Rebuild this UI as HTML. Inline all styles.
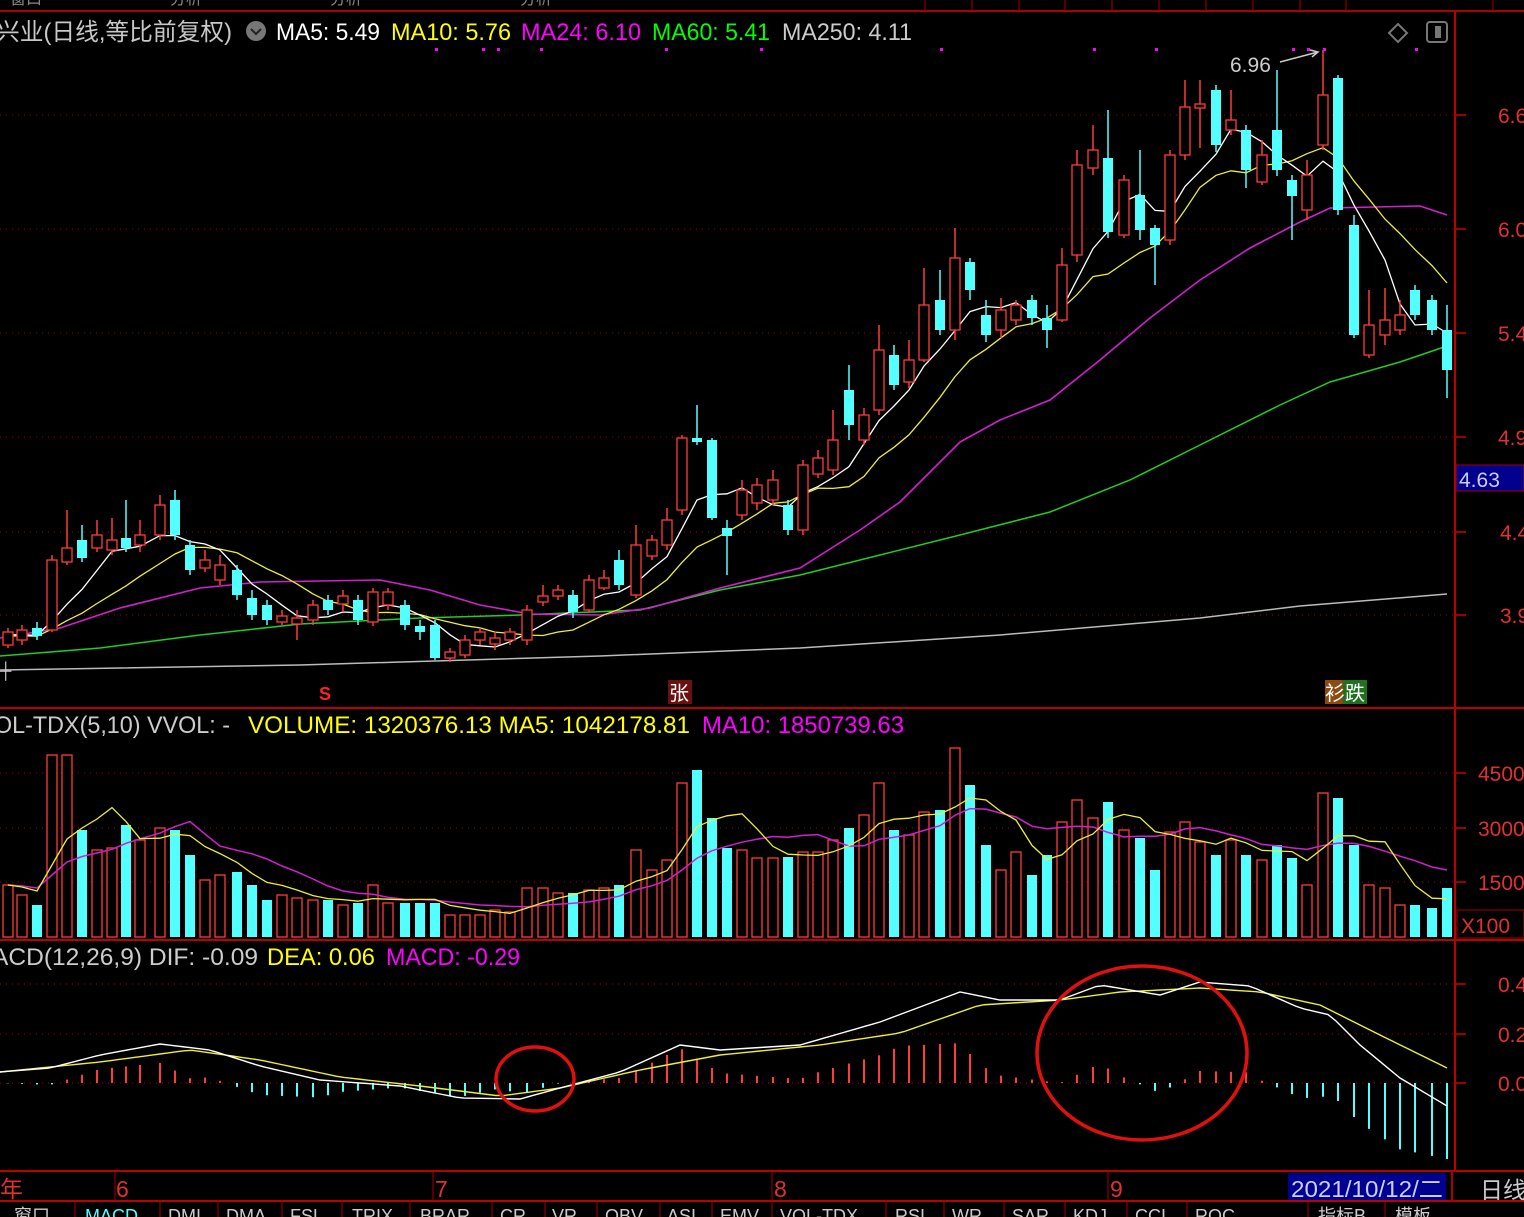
<!DOCTYPE html>
<html><head><meta charset="utf-8"><style>
html,body{margin:0;padding:0;background:#000;width:1524px;height:1217px;overflow:hidden}
svg{display:block}
text{font-family:"Liberation Sans","Noto Sans CJK SC",sans-serif}
</style></head><body>
<svg id="s" width="1524" height="1217" xmlns="http://www.w3.org/2000/svg">
<rect width="1524" height="1217" fill="#000"/>
<g fill="#888" font-size="16"><text x="10" y="4">窗口</text><text x="170" y="4">分析</text><text x="330" y="4">分析</text><text x="520" y="4">分析</text></g>
<line x1="0" y1="11" x2="1524" y2="11" stroke="#a00" stroke-width="2"/>
<g stroke="#a00" stroke-width="1"><line x1="925" y1="0" x2="925" y2="11"/><line x1="972" y1="0" x2="972" y2="11"/><line x1="1019" y1="0" x2="1019" y2="11"/><line x1="1065" y1="0" x2="1065" y2="11"/><line x1="1112" y1="0" x2="1112" y2="11"/><line x1="1159" y1="0" x2="1159" y2="11"/><line x1="1206" y1="0" x2="1206" y2="11"/><line x1="1253" y1="0" x2="1253" y2="11"/><line x1="1300" y1="0" x2="1300" y2="11"/><line x1="1346" y1="0" x2="1346" y2="11"/><line x1="1493" y1="0" x2="1493" y2="11"/></g>
<line x1="1455" y1="11" x2="1455" y2="1172" stroke="#b00" stroke-width="2"/>
<line x1="0" y1="708" x2="1524" y2="708" stroke="#b00" stroke-width="2"/>
<line x1="0" y1="940" x2="1524" y2="940" stroke="#b00" stroke-width="2"/>
<line x1="0" y1="1171" x2="1524" y2="1171" stroke="#b00" stroke-width="2"/>
<line x1="0" y1="1201" x2="1524" y2="1201" stroke="#b00" stroke-width="2"/>
<g id="grid" stroke="#a00" stroke-dasharray="1,5" stroke-width="1"></g>
<g id="plot"></g>
<g font-size="24">
<text x="-4" y="40" fill="#c8c8c8" textLength="236" lengthAdjust="spacingAndGlyphs">兴业(日线,等比前复权)</text>
<circle cx="256" cy="31" r="10" fill="#777"/><path d="M251 29 L256 34 L261 29" stroke="#222" stroke-width="2" fill="none"/>
<text x="276" y="40" fill="#fff" textLength="104" lengthAdjust="spacingAndGlyphs">MA5: 5.49</text>
<text x="391" y="40" fill="#ff0" textLength="120" lengthAdjust="spacingAndGlyphs">MA10: 5.76</text>
<text x="521" y="40" fill="#f0f" textLength="120" lengthAdjust="spacingAndGlyphs">MA24: 6.10</text>
<text x="652" y="40" fill="#0f0" textLength="118" lengthAdjust="spacingAndGlyphs">MA60: 5.41</text>
<text x="782" y="40" fill="#ccc" textLength="130" lengthAdjust="spacingAndGlyphs">MA250: 4.11</text>
<text x="-6" y="733" fill="#ccc" textLength="236" lengthAdjust="spacingAndGlyphs">OL-TDX(5,10)  VVOL: -</text>
<text x="248" y="733" fill="#ff0" textLength="442" lengthAdjust="spacingAndGlyphs">VOLUME: 1320376.13  MA5: 1042178.81</text>
<text x="702" y="733" fill="#f0f" textLength="202" lengthAdjust="spacingAndGlyphs">MA10: 1850739.63</text>
<text x="-8" y="965" fill="#ccc" textLength="266" lengthAdjust="spacingAndGlyphs">ACD(12,26,9)  DIF: -0.09</text>
<text x="267" y="965" fill="#ff0" textLength="108" lengthAdjust="spacingAndGlyphs">DEA: 0.06</text>
<text x="386" y="965" fill="#f0f" textLength="134" lengthAdjust="spacingAndGlyphs">MACD: -0.29</text>
</g>
<path d="M1389 33 L1398 24 L1407 33 L1398 42 Z" stroke="#777" stroke-width="2" fill="none"/>
<rect x="1427" y="22" width="20" height="20" rx="3" stroke="#777" stroke-width="2" fill="none"/><rect x="1435" y="26" width="6" height="12" fill="#777"/>
<g font-size="21" fill="#e03030">
<text x="1498" y="123">6.6</text><text x="1498" y="237">6.0</text><text x="1498" y="341">5.4</text><text x="1498" y="445">4.9</text><text x="1500" y="540">4.4</text><text x="1500" y="623">3.9</text>
<text x="1478" y="781">4500</text><text x="1478" y="836">3000</text><text x="1478" y="890">1500</text>
<text x="1498" y="992">0.4</text><text x="1498" y="1042">0.2</text><text x="1498" y="1091">0.0</text>
</g>
<g stroke="#c00" stroke-width="1.5"><line x1="1456" y1="115" x2="1466" y2="115"/><line x1="1456" y1="229" x2="1466" y2="229"/><line x1="1456" y1="333" x2="1466" y2="333"/><line x1="1456" y1="437" x2="1466" y2="437"/><line x1="1456" y1="532" x2="1466" y2="532"/><line x1="1456" y1="615" x2="1466" y2="615"/><line x1="1456" y1="773" x2="1466" y2="773"/><line x1="1456" y1="828" x2="1466" y2="828"/><line x1="1456" y1="882" x2="1466" y2="882"/><line x1="1456" y1="984" x2="1466" y2="984"/><line x1="1456" y1="1034" x2="1466" y2="1034"/><line x1="1456" y1="1083" x2="1466" y2="1083"/></g>
<rect x="1456" y="465" width="68" height="26" fill="#00008c" stroke="#a00"/>
<text x="1459" y="487" font-size="21" fill="#ccf">4.63</text>
<rect x="1457" y="910" width="67" height="28" fill="#000" stroke="#a00"/>
<text x="1461" y="933" font-size="21" fill="#e03030">X100</text>
<text x="319" y="700" font-size="18" fill="#f22" font-weight="bold">S</text>
<rect x="668" y="680" width="24" height="24" fill="#6a1010"/><text x="669" y="700" font-size="20" fill="#fff">张</text>
<rect x="1325" y="680" width="18" height="24" fill="#8a4a10"/><rect x="1343" y="680" width="24" height="24" fill="#207020"/>
<text x="1325" y="700" font-size="20" fill="#fff">衫跌</text>
<text x="1230" y="72" font-size="21" fill="#ccc">6.96</text>
<path d="M1280 62 L1318 52 M1310 50 L1318 52 L1312 57" stroke="#ccc" fill="none" stroke-width="1.5"/>
<text x="0" y="676" font-size="16" fill="#ccc">┼</text>
<ellipse cx="535" cy="1079" rx="39" ry="32" stroke="#e01010" stroke-width="3.5" fill="none"/>
<ellipse cx="1142" cy="1053" rx="105" ry="87" stroke="#e01010" stroke-width="3.5" fill="none"/>
<g stroke="#a00"><line x1="115" y1="1172" x2="115" y2="1201"/><line x1="433" y1="1172" x2="433" y2="1201"/><line x1="772" y1="1172" x2="772" y2="1201"/><line x1="1108" y1="1172" x2="1108" y2="1201"/><line x1="1452" y1="1172" x2="1452" y2="1201" stroke-width="2"/></g>
<g font-size="23" fill="#e03030"><text x="0" y="1197">年</text><text x="116" y="1197">6</text><text x="435" y="1197">7</text><text x="774" y="1197">8</text><text x="1110" y="1197">9</text></g>
<rect x="1288" y="1173" width="158" height="27" fill="#000090"/>
<text x="1291" y="1197" font-size="23" fill="#ccf" textLength="152" lengthAdjust="spacingAndGlyphs">2021/10/12/二</text>
<text x="1480" y="1198" font-size="23" fill="#ccc">日线</text>
<g font-size="18" fill="#ccc"><text x="14" y="1222">窗口</text><text x="85" y="1222" fill="#5ff">MACD</text><text x="168" y="1222">DMI</text><text x="226" y="1222">DMA</text><text x="290" y="1222">FSL</text><text x="352" y="1222">TRIX</text><text x="420" y="1222">BRAR</text><text x="500" y="1222">CR</text><text x="552" y="1222">VR</text><text x="605" y="1222">OBV</text><text x="667" y="1222">ASI</text><text x="720" y="1222">EMV</text><text x="780" y="1222">VOL-TDX</text><text x="895" y="1222">RSI</text><text x="952" y="1222">WR</text><text x="1012" y="1222">SAR</text><text x="1073" y="1222">KDJ</text><text x="1135" y="1222">CCI</text><text x="1195" y="1222">ROC</text><text x="1318" y="1222">指标B</text><text x="1395" y="1222">模板</text></g>
<g stroke="#a00"><line x1="75" y1="1202" x2="75" y2="1217"/><line x1="160" y1="1202" x2="160" y2="1217"/><line x1="218" y1="1202" x2="218" y2="1217"/><line x1="282" y1="1202" x2="282" y2="1217"/><line x1="342" y1="1202" x2="342" y2="1217"/><line x1="410" y1="1202" x2="410" y2="1217"/><line x1="492" y1="1202" x2="492" y2="1217"/><line x1="545" y1="1202" x2="545" y2="1217"/><line x1="597" y1="1202" x2="597" y2="1217"/><line x1="660" y1="1202" x2="660" y2="1217"/><line x1="712" y1="1202" x2="712" y2="1217"/><line x1="772" y1="1202" x2="772" y2="1217"/><line x1="886" y1="1202" x2="886" y2="1217"/><line x1="944" y1="1202" x2="944" y2="1217"/><line x1="1004" y1="1202" x2="1004" y2="1217"/><line x1="1065" y1="1202" x2="1065" y2="1217"/><line x1="1127" y1="1202" x2="1127" y2="1217"/><line x1="1187" y1="1202" x2="1187" y2="1217"/><line x1="1308" y1="1202" x2="1308" y2="1217"/><line x1="1385" y1="1202" x2="1385" y2="1217"/></g>
</svg>
<script>
var NS="http://www.w3.org/2000/svg";
function el(p,t,a){var e=document.createElementNS(NS,t);for(var k in a)e.setAttribute(k,a[k]);p.appendChild(e);return e;}
var g=document.getElementById("plot"),gr=document.getElementById("grid");
[115,229,333,437,532,615,773,828,882,984,1034,1083].forEach(function(y){el(gr,"line",{x1:0,y1:y,x2:1455,y2:y});});
var C=[[8,632,645,628,648,1],[22,630,640,625,645,1],[37,628,636,622,640,0],[52,560,630,555,632,1],[67,548,562,510,565,1],[82,540,558,525,562,0],[97,535,548,520,552,1],[112,540,550,518,555,1],[126,538,548,500,552,0],[140,535,545,520,552,1],[160,505,535,495,540,1],[175,500,535,490,540,0],[190,545,570,540,575,0],[205,560,568,550,572,1],[220,565,580,555,585,1],[237,570,595,565,600,0],[252,598,615,590,620,0],[267,605,620,600,625,0],[282,616,622,610,625,1],[297,618,624,610,640,1],[313,605,620,600,625,1],[328,600,610,595,615,0],[343,596,604,590,612,1],[358,600,620,595,625,0],[373,592,622,588,626,1],[388,592,605,588,610,1],[405,605,625,600,630,0],[420,626,632,620,640,0],[435,625,658,620,660,0],[450,652,658,648,662,1],[465,640,655,635,658,1],[480,632,640,628,645,1],[495,638,644,632,650,1],[510,632,640,628,645,1],[527,610,640,605,645,1],[543,596,602,585,606,1],[558,590,596,585,600,1],[573,595,612,590,618,0],[589,580,610,575,612,1],[604,578,588,570,590,1],[619,560,585,550,590,0],[636,545,595,525,598,1],[652,540,556,535,560,1],[667,520,545,508,550,1],[682,438,510,435,515,1],[697,438,442,405,445,0],[712,440,518,438,520,0],[727,528,536,520,575,0],[742,490,515,480,520,1],[757,485,503,478,510,1],[773,480,500,470,505,1],[788,505,530,500,535,0],[803,465,530,460,535,1],[818,458,474,450,478,1],[833,440,470,410,475,1],[849,390,425,365,440,0],[864,415,440,408,445,1],[879,350,410,325,415,1],[894,355,385,345,390,0],[909,360,382,340,388,1],[924,305,360,268,362,1],[940,300,330,270,335,0],[955,258,330,228,340,1],[970,262,290,258,300,0],[986,315,335,300,342,0],[1001,310,330,298,338,1],[1016,305,320,300,325,1],[1032,300,318,295,325,0],[1047,318,330,305,348,0],[1062,265,320,248,322,1],[1077,165,255,150,262,1],[1093,150,168,125,175,1],[1108,158,232,110,238,0],[1124,180,235,175,238,1],[1140,195,230,150,240,0],[1155,228,245,225,285,0],[1170,155,240,150,245,1],[1185,107,155,80,160,1],[1200,104,108,80,148,1],[1216,90,145,85,152,0],[1231,120,130,90,135,1],[1246,130,170,125,188,0],[1262,155,182,140,185,1],[1277,130,170,70,176,0],[1292,180,196,175,240,0],[1307,175,210,160,220,1],[1323,95,145,50,150,1],[1338,78,210,75,215,0],[1354,225,335,215,338,0],[1369,325,355,290,358,1],[1385,320,335,288,345,1],[1400,315,330,300,335,1],[1415,290,315,285,320,0],[1432,300,330,295,335,0],[1447,330,370,305,398,0]];
var RED="#ff3b3b",CY="#54ffff";
var closes=C.map(function(c){return c[5]?c[1]:c[2];});
function ma(arr,n){return arr.map(function(v,i){var s=0;for(var j=0;j<n;j++){s+=arr[Math.max(0,i-j)];}return s/n;});}
function poly(pts,col,w){el(g,"polyline",{points:pts.map(function(p){return p[0]+","+p[1]}).join(" "),fill:"none",stroke:col,"stroke-width":w||1.3});}
poly([[0,670],[300,665],[600,656],[800,648],[1000,635],[1200,618],[1300,606],[1447,594]],"#bbb",1.5);
poly([[0,656],[100,648],[200,635],[300,624],[420,618],[520,615],[640,610],[720,590],[800,575],[880,555],[960,535],[1050,512],[1130,480],[1200,445],[1280,405],[1330,382],[1400,362],[1447,346]],"#2c2",1.5);
poly([[0,638],[60,628],[120,608],[200,588],[260,582],[380,580],[430,590],[480,605],[530,614],[600,615],[650,608],[720,588],[800,568],[860,530],[900,502],[960,442],[1000,420],[1050,400],[1100,360],[1150,318],[1200,280],[1250,248],[1300,222],[1330,208],[1420,206],[1447,215]],"#d020d0",1.6);
var m5=ma(closes,5),m10=ma(closes,10);
poly(C.map(function(c,i){return [c[0],m10[i]+4]}),"#ee3",1.3);
poly(C.map(function(c,i){return [c[0],m5[i]+3]}),"#fff",1.3);
C.forEach(function(c){var x=c[0],col=c[5]?RED:CY;
 el(g,"line",{x1:x,y1:c[3],x2:x,y2:c[4],stroke:col,"stroke-width":1.5});
 if(c[5]){el(g,"rect",{x:x-5,y:c[1],width:10,height:Math.max(1,c[2]-c[1]),fill:"#000",stroke:col,"stroke-width":1.3});}
 else el(g,"rect",{x:x-5,y:c[1],width:10,height:Math.max(2,c[2]-c[1]),fill:col});
});
[435,482,497,540,665,760,940,1093,1155,1292,1307,1323,1415].forEach(function(x){el(g,"rect",{x:x,y:48,width:3,height:3,fill:"#f0f"});});
var V=[885,895,905,755,755,830,850,848,825,840,828,830,855,880,875,872,885,900,895,898,900,900,905,903,885,903,903,903,903,915,915,915,910,912,888,888,893,893,890,888,885,850,870,860,783,770,818,848,850,858,858,857,852,852,840,828,815,783,830,835,812,810,748,785,845,870,852,875,855,822,800,818,802,830,838,870,832,822,842,855,840,855,860,845,858,885,793,798,845,885,888,905,905,908,888];
var vh=V.map(function(v){return 937-v;});
C.forEach(function(c,i){var x=c[0],col=c[5]?RED:CY,t=V[i]||900;
 if(c[5])el(g,"rect",{x:x-5,y:t,width:10,height:937-t,fill:"#000",stroke:col,"stroke-width":1.3});
 else el(g,"rect",{x:x-5,y:t,width:10,height:937-t,fill:col});});
var v5=ma(vh,5),v10=ma(vh,10);
poly(C.map(function(c,i){return [c[0],937-v10[i]]}),"#d020d0",1.5);
poly(C.map(function(c,i){return [c[0],937-v5[i]]}),"#ee3",1.3);
function interp(k,x){for(var i=0;i<k.length-1;i++){if(x<=k[i+1][0]){var t=(x-k[i][0])/(k[i+1][0]-k[i][0]);return k[i][1]+t*(k[i+1][1]-k[i][1]);}}return k[k.length-1][1];}
var DIF=[[0,1072],[50,1068],[100,1055],[160,1044],[210,1050],[260,1066],[320,1080],[400,1086],[460,1098],[520,1099],[560,1088],[620,1072],[680,1045],[720,1050],[800,1045],[880,1022],[960,992],[1000,1000],[1060,1000],[1100,985],[1160,995],[1200,982],[1250,986],[1300,1008],[1330,1015],[1360,1045],[1400,1078],[1447,1106]];
var DEA=[[0,1072],[100,1062],[190,1050],[260,1060],[340,1077],[420,1086],[500,1096],[560,1088],[640,1070],[720,1055],[820,1045],[900,1033],[980,1005],[1060,1000],[1120,992],[1200,988],[1260,992],[1320,1005],[1380,1035],[1447,1068]];
C.forEach(function(c){var x=c[0],h=2*(interp(DEA,x)-interp(DIF,x));
 el(g,"line",{x1:x,y1:1083,x2:x,y2:1083-h,stroke:h>0?RED:CY,"stroke-width":2});});
var px=[];for(var x=0;x<=1447;x+=8)px.push(x);px.push(1447);
poly(px.map(function(x){return [x,interp(DEA,x)]}),"#ee3",1.4);
poly(px.map(function(x){return [x,interp(DIF,x)]}),"#fff",1.4);
var svg=document.getElementById("s");
Array.prototype.slice.call(svg.querySelectorAll("ellipse")).forEach(function(e){svg.appendChild(e);});
</script>
</body></html>
